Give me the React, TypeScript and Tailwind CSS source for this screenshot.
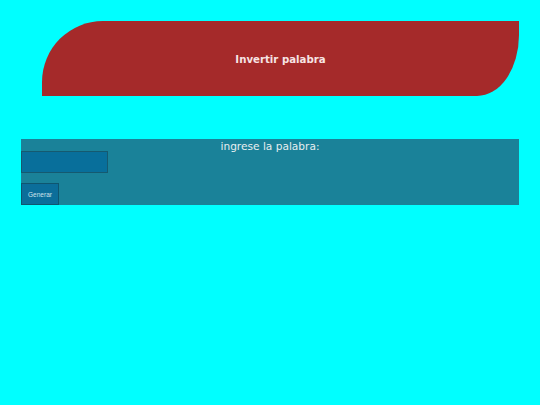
export default function App() {
  return (
    <div className="min-h-[405px] bg-[#00ffff] pt-[21px] font-['DejaVu_Sans',sans-serif]">
      <header className="ml-[42px] mr-[21px] flex h-[75px] items-center justify-center rounded-tl-[61px] rounded-br-[42px_61px] bg-[#a52a2a]">
        <h1 className="pt-[2px] text-[10.2px] font-bold text-[#f6e4e4]">Invertir palabra</h1>
      </header>

      <main className="mx-[21px] mt-[43px] bg-[#1a8299]">
        <label htmlFor="palabra" className="block h-[12px] text-center text-[10.6px] leading-[15px] text-[#e6eef0]">
          ingrese la palabra:
        </label>
        <input
          id="palabra"
          type="text"
          className="block h-[22px] w-[87px] border border-[#155a70] bg-[#086f9b] outline-none"
        />
        <button
          type="button"
          className="mt-[10px] block h-[22px] w-[38px] border border-[#0e5670] bg-[#0b6e9a] pt-[1px] font-['Liberation_Sans',sans-serif] text-[6.5px] text-[#cfe3ea]"
        >
          Generar
        </button>
      </main>
    </div>
  );
}
